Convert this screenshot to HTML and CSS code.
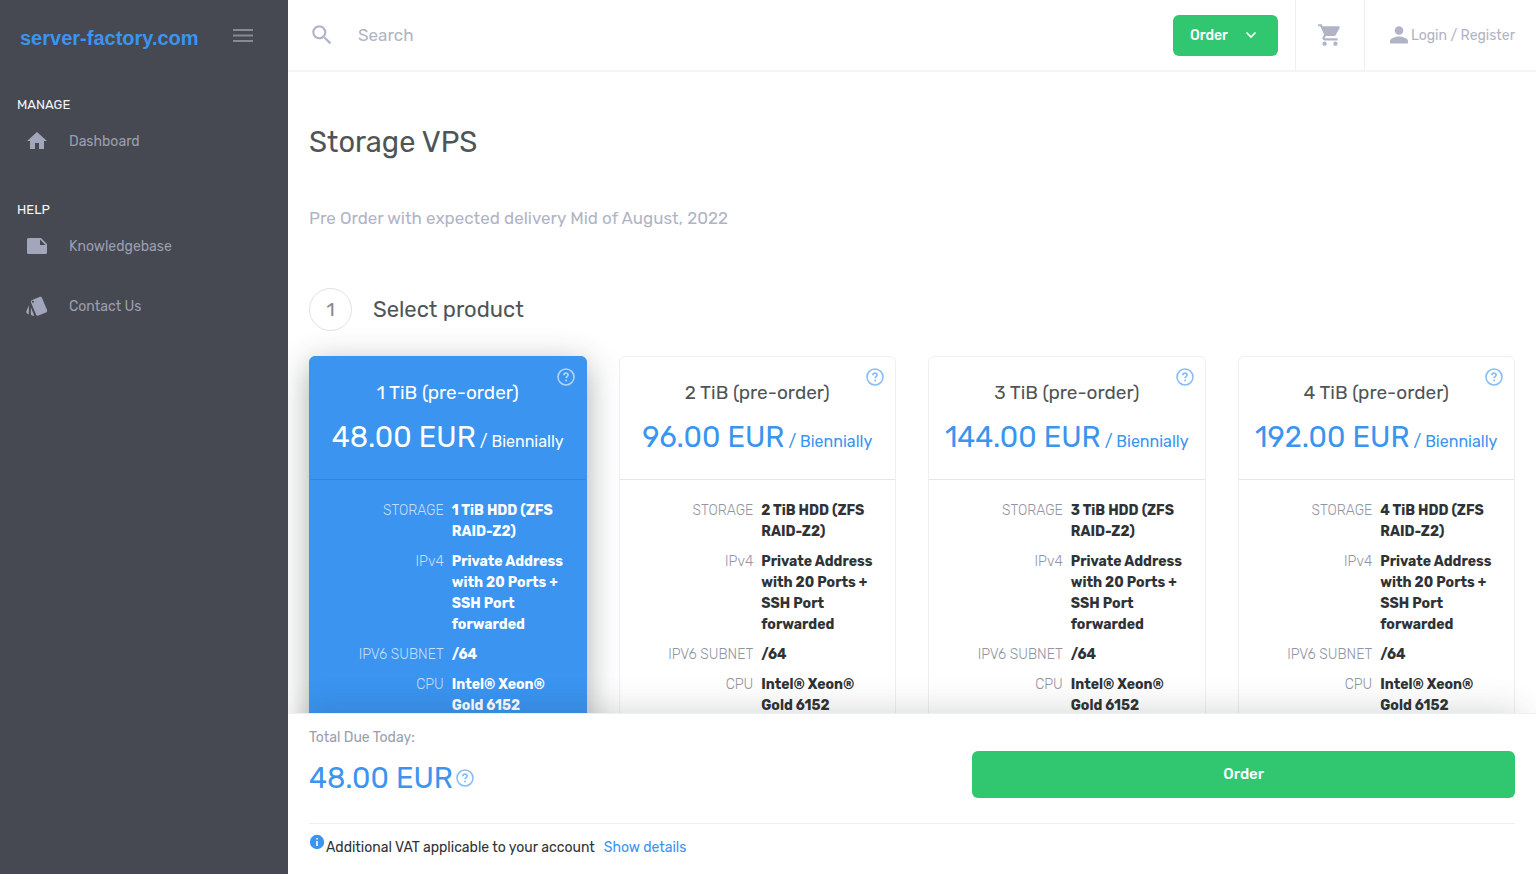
FILE: index.html
```html
<!DOCTYPE html>
<html lang="en">
<head>
    <meta charset="UTF-8">
    <meta name="viewport" content="width=device-width, initial-scale=1.0">
    <title>Storage VPS - server-factory.com</title>
    <link rel="stylesheet" href="styles.css">
</head>
<body>
    <!-- Shared icons -->
    <svg class="sprite" aria-hidden="true">
        <symbol id="icon-help" viewBox="0 0 18 18">
            <circle cx="9" cy="9" r="8" fill="none" stroke="currentColor" stroke-width="1.6"/>
            <path d="M6.9 7.2c0-1.3.9-2 2.1-2s2.1.7 2.1 1.9c0 1.400-2 1.500-2 3.100" fill="none" stroke="currentColor" stroke-width="1.7"/>
            <circle cx="9.1" cy="12.4" r="1" fill="currentColor"/>
        </symbol>
    </svg>

    <div class="app">
        <aside class="sidebar">
            <div class="sidebar-top">
                <a class="logo" href="#">server-factory.com</a>
                <button class="icon-btn" type="button" aria-label="Toggle menu">
                    <svg width="20" height="14" viewBox="0 0 20 14" fill="currentColor"><path d="M0 0h20v2H0zM0 5.5h20v2H0zM0 11h20v2H0z"/></svg>
                </button>
            </div>
            <nav>
                <h2 class="nav-title">Manage</h2>
                <a class="nav-link" href="#">
                    <svg width="24" height="24" viewBox="0 0 24 24" fill="currentColor"><path d="M10 20v-6h4v6h5v-8h3L12 3 2 12h3v8z"/></svg>
                    Dashboard
                </a>
                <h2 class="nav-title">Help</h2>
                <a class="nav-link" href="#">
                    <svg width="24" height="24" viewBox="0 0 24 24" fill="currentColor"><path fill-rule="evenodd" d="M3.500 4H16l6 6v8.500a1.500 1.500 0 0 1-1.500 1.500h-17A1.500 1.500 0 0 1 2 18.500v-13A1.500 1.500 0 0 1 3.500 4zM15 5.500V11h5.500z"/></svg>
                    Knowledgebase
                </a>
                <a class="nav-link" href="#">
                    <svg width="24" height="24" viewBox="0 0 24 24" fill="currentColor"><path d="M2.530 19.650l1.340.56v-9.030l-2.430 5.860c-.41 1.020.08 2.190 1.090 2.610zm19.500-3.700L17.070 3.980c-.31-.75-1.040-1.210-1.810-1.230-.26 0-.53.04-.79.15L7.100 5.950c-.75.31-1.210 1.030-1.230 1.800-.01.27.04.54.15.8l4.960 11.970c.31.76 1.050 1.220 1.830 1.230.26 0 .52-.05.77-.15l7.360-3.050c1.020-.42 1.510-1.590 1.090-2.600zM7.880 8.750c-.55 0-1-.45-1-1s.45-1 1-1 1 .45 1 1-.45 1-1 1zm-2 11c0 1.100.9 2 2 2h1.450l-3.450-8.340v6.340z"/></svg>
                    Contact Us
                </a>
            </nav>
        </aside>

        <div class="page">
            <header class="topbar">
                <label class="search">
                    <svg width="26" height="26" viewBox="0 0 24 24" fill="currentColor" aria-hidden="true"><path d="M15.500 14h-.79l-.28-.27A6.470 6.470 0 0 0 16 9.500 6.500 6.500 0 1 0 9.500 16c1.610 0 3.090-.59 4.230-1.570l.27.28v.79l5 4.990L20.490 19l-4.990-5zm-6 0C7.010 14 5 11.990 5 9.500S7.010 5 9.500 5 14 7.010 14 9.500 11.990 14 9.500 14z"/></svg>
                    <input type="search" placeholder="Search" aria-label="Search">
                </label>
                <button class="order-menu" type="button">
                    Order
                    <svg width="12" height="8" viewBox="0 0 12 8" fill="none" stroke="currentColor" stroke-width="1.7"><path d="M1.500 1.500L6 6l4.500-4.500"/></svg>
                </button>
                <a class="topbar-item cart" href="#" aria-label="Cart">
                    <svg width="26" height="26" viewBox="0 0 24 24" fill="currentColor"><path d="M7 18c-1.100 0-1.990.9-1.990 2S5.900 22 7 22s2-.9 2-2-.9-2-2-2zM1 2v2h2l3.600 7.590-1.350 2.450c-.16.28-.25.61-.25.96 0 1.100.9 2 2 2h12v-2H7.420c-.14 0-.25-.11-.25-.25l.03-.12.900-1.630h7.450c.75 0 1.410-.41 1.750-1.030l3.580-6.490A1 1 0 0 0 20 4H5.210l-.94-2H1zm16 16c-1.100 0-1.990.9-1.990 2s.89 2 1.990 2 2-.9 2-2-.9-2-2-2z"/></svg>
                </a>
                <a class="topbar-item login" href="#">
                    <svg width="18" height="18" viewBox="0 0 18 18" fill="currentColor"><circle cx="9" cy="4.500" r="4.300"/><path d="M0 15c0-3 6-4.600 9-4.600s9 1.600 9 4.600v2.500H0z"/></svg>
                    Login / Register
                </a>
            </header>

            <main class="content">
                <h1>Storage VPS</h1>
                <p class="tagline">Pre Order with expected delivery Mid of August, 2022</p>

                <div class="step">
                    <span class="step-number">1</span>
                    <h2>Select product</h2>
                </div>

                <div class="products">
                    <label class="product">
                        <input type="radio" name="product" value="1" checked>
                        <div class="card">
                            <div class="card-head">
                                <svg class="help"><use href="#icon-help"/></svg>
                                <h3>1 TiB (pre-order)</h3>
                                <p class="price">48.00 EUR <small>/ Biennially</small></p>
                            </div>
                            <dl class="specs">
                                <dt>STORAGE</dt><dd>1 TiB HDD (ZFS RAID-Z2)</dd>
                                <dt>IPv4</dt><dd>Private Address with 20 Ports + SSH Port forwarded</dd>
                                <dt>IPV6 SUBNET</dt><dd>/64</dd>
                                <dt>CPU</dt><dd>Intel® Xeon® Gold 6152</dd>
                            </dl>
                        </div>
                    </label>
                    <label class="product">
                        <input type="radio" name="product" value="2">
                        <div class="card">
                            <div class="card-head">
                                <svg class="help"><use href="#icon-help"/></svg>
                                <h3>2 TiB (pre-order)</h3>
                                <p class="price">96.00 EUR <small>/ Biennially</small></p>
                            </div>
                            <dl class="specs">
                                <dt>STORAGE</dt><dd>2 TiB HDD (ZFS RAID-Z2)</dd>
                                <dt>IPv4</dt><dd>Private Address with 20 Ports + SSH Port forwarded</dd>
                                <dt>IPV6 SUBNET</dt><dd>/64</dd>
                                <dt>CPU</dt><dd>Intel® Xeon® Gold 6152</dd>
                            </dl>
                        </div>
                    </label>
                    <label class="product">
                        <input type="radio" name="product" value="3">
                        <div class="card">
                            <div class="card-head">
                                <svg class="help"><use href="#icon-help"/></svg>
                                <h3>3 TiB (pre-order)</h3>
                                <p class="price">144.00 EUR <small>/ Biennially</small></p>
                            </div>
                            <dl class="specs">
                                <dt>STORAGE</dt><dd>3 TiB HDD (ZFS RAID-Z2)</dd>
                                <dt>IPv4</dt><dd>Private Address with 20 Ports + SSH Port forwarded</dd>
                                <dt>IPV6 SUBNET</dt><dd>/64</dd>
                                <dt>CPU</dt><dd>Intel® Xeon® Gold 6152</dd>
                            </dl>
                        </div>
                    </label>
                    <label class="product">
                        <input type="radio" name="product" value="4">
                        <div class="card">
                            <div class="card-head">
                                <svg class="help"><use href="#icon-help"/></svg>
                                <h3>4 TiB (pre-order)</h3>
                                <p class="price">192.00 EUR <small>/ Biennially</small></p>
                            </div>
                            <dl class="specs">
                                <dt>STORAGE</dt><dd>4 TiB HDD (ZFS RAID-Z2)</dd>
                                <dt>IPv4</dt><dd>Private Address with 20 Ports + SSH Port forwarded</dd>
                                <dt>IPV6 SUBNET</dt><dd>/64</dd>
                                <dt>CPU</dt><dd>Intel® Xeon® Gold 6152</dd>
                            </dl>
                        </div>
                    </label>
                </div>
            </main>

            <footer class="summary">
                <div class="summary-main">
                    <div>
                        <p class="total-label">Total Due Today:</p>
                        <p class="total">48.00 EUR<svg class="help"><use href="#icon-help"/></svg></p>
                    </div>
                    <button class="order-btn" type="button">Order</button>
                </div>
                <p class="vat">
                    <svg width="16" height="16" viewBox="0 0 16 16" aria-hidden="true"><circle cx="8" cy="8" r="7.200" fill="#3a94f0"/><path d="M7.200 4h1.600v1.600H7.200zM7.200 7h1.600v5H7.200z" fill="#fff"/></svg>
                    <span>Additional VAT applicable to your account</span>
                    <a href="#">Show details</a>
                </p>
            </footer>
        </div>
    </div>
</body>
</html>
```

FILE: styles.css
```css
* {
    box-sizing: border-box;
}
body {
    margin: 0;
    font-family: Rubik, Roboto, sans-serif;
    font-size: 14px;
    line-height: 21px;
    color: #2f3336;
    background-color: #fff;
}
h1, h2, h3, p, dl, dd {
    margin: 0;
    font-weight: normal;
}
a {
    color: #3a94f0;
    text-decoration: none;
}
button, input {
    font-family: inherit;
}
svg {
    flex: none;
}
.sprite {
    position: absolute;
    width: 0;
    height: 0;
}
.app {
    display: flex;
    height: 100vh;
}

/* Sidebar */
.sidebar {
    flex: 0 0 288px;
    background-color: #464951;
}
.sidebar-top {
    display: flex;
    align-items: center;
    justify-content: space-between;
    height: 72px;
    padding: 0 35px 0 20px;
}
.logo {
    font-family: "Liberation Sans", Arial, sans-serif;
    font-size: 20px;
    font-weight: bold;
    padding-top: 5px;
}
.icon-btn {
    display: flex;
    padding: 0;
    border: none;
    background: none;
    color: #868996;
    cursor: pointer;
}
.nav-title {
    padding: 22px 17px 0;
    font-size: 13px;
    text-transform: uppercase;
    color: #f4f5f8;
}
.nav-link {
    display: flex;
    align-items: center;
    gap: 20px;
    height: 60px;
    padding: 0 25px;
    color: #9a9eb0;
}
.nav-link svg {
    color: #a2a6bb;
}
.nav-title + .nav-link {
    margin-top: -4px;
}
.nav-link + .nav-title {
    padding-top: 28px;
}

/* Top bar */
.page {
    display: flex;
    flex: 1;
    flex-direction: column;
    min-width: 0;
    overflow: hidden;
}
.topbar {
    display: flex;
    align-items: center;
    flex: 0 0 72px;
    border-bottom: 2px solid #f3f4f6;
    color: #b1b4c6;
}
.search {
    display: flex;
    flex: 1;
    align-items: center;
    gap: 23px;
    padding: 0 21px;
}
.search input {
    flex: 1;
    padding: 0;
    border: none;
    outline: none;
    background: none;
    font-size: 17px;
}
.search input::placeholder {
    color: #b1b4c6;
}
.order-menu {
    display: flex;
    align-items: center;
    gap: 17px;
    height: 41px;
    margin-right: 17px;
    padding: 0 21px 0 17px;
    border: none;
    border-radius: 6px;
    background-color: #30c770;
    color: #fff;
    font-size: 14px;
    font-weight: 500;
    cursor: pointer;
}
.topbar-item {
    display: flex;
    align-items: center;
    height: 100%;
    border-left: 1px solid #eeeff2;
    color: #b1b4c6;
}
.cart {
    padding: 0 21px;
}
.login {
    gap: 3px;
    padding: 0 21px 0 25px;
}

/* Content */
.content {
    flex: 1;
    min-height: 0;
    padding: 49px 21px;
    overflow-y: auto;
    scrollbar-width: none;
}
h1 {
    font-size: 29px;
    line-height: 42px;
    color: #4f5557;
}
.tagline {
    margin-top: 45px;
    font-size: 17px;
    color: #b1b4c6;
}
.step {
    display: flex;
    align-items: center;
    gap: 21px;
    margin: 59px 0 25px;
}
.step h2 {
    font-size: 22px;
    color: #4f5557;
}
.step-number {
    width: 43px;
    height: 43px;
    border: 1px solid #dfe1e3;
    border-radius: 50%;
    font-size: 19px;
    line-height: 41px;
    text-align: center;
    color: #84888b;
}
.products {
    display: grid;
    grid-template-columns: repeat(4, 1fr);
    gap: 32px;
}
.product {
    position: relative;
    cursor: pointer;
}
.product input {
    position: absolute;
    opacity: 0;
}
.card {
    height: 100%;
    border: 1px solid #eeeff2;
    border-radius: 6px;
}
.card-head {
    position: relative;
    height: 123px;
    padding: 22px 8px 0;
    border-bottom: 1px solid #e4e6e8;
    text-align: center;
}
.card-head .help {
    position: absolute;
    top: 11px;
    right: 11px;
}
.help {
    width: 18px;
    height: 18px;
    color: #3a94f0;
    opacity: 0.6;
}
.card h3 {
    font-size: 19px;
    line-height: 28px;
    color: #4f5557;
}
.price {
    margin-top: 9px;
    font-size: 29px;
    line-height: 42px;
    color: #3a94f0;
    white-space: nowrap;
}
.price small {
    margin-left: -3px;
    font-size: 16px;
}
.specs {
    display: grid;
    grid-template-columns: 1fr 1fr;
    gap: 9px 8px;
    padding: 20px 20px 32px;
}
.specs dt {
    font-weight: 300;
    text-align: right;
    color: #9094a3;
}
.specs dd {
    font-weight: bold;
}

/* Selected product */
input:checked + .card {
    border-color: #3a94f0;
    background-color: #3a94f0;
    box-shadow: 0 8px 32px rgba(40, 50, 50, 0.4);
    color: #fff;
}
input:checked + .card h3,
input:checked + .card .price,
input:checked + .card .help {
    color: #fff;
}
input:checked + .card dt {
    color: #c4dffb;
}
input:checked + .card .card-head {
    border-color: #3386df;
}

/* Order summary */
.summary {
    position: relative;
    z-index: 1;
    padding: 0 21px 16px;
    border-top: 1px solid #eeeff2;
    background-color: #fff;
    box-shadow: 0 -16px 32px -16px rgba(40, 50, 50, 0.22);
}
.summary-main {
    display: grid;
    grid-template-columns: 11fr 9fr;
    align-items: center;
    height: 110px;
    border-bottom: 1px solid #eeeff2;
}
.summary-main > div {
    height: 84px;
}
.total-label {
    color: #9a9eb0;
}
.total {
    display: flex;
    align-items: center;
    gap: 3px;
    margin-top: 9px;
    font-size: 29px;
    line-height: 42px;
    color: #3a94f0;
}
.order-btn {
    height: 47px;
    margin-top: 11px;
    border: none;
    border-radius: 6px;
    background-color: #30c770;
    color: #fff;
    font-size: 15px;
    font-weight: 500;
    cursor: pointer;
}
.vat {
    display: flex;
    align-items: flex-end;
    height: 34px;
    padding-top: 10px;
}
.vat svg {
    align-self: flex-start;
    margin-right: 1px;
}
.vat a {
    margin-left: 9px;
}
```
